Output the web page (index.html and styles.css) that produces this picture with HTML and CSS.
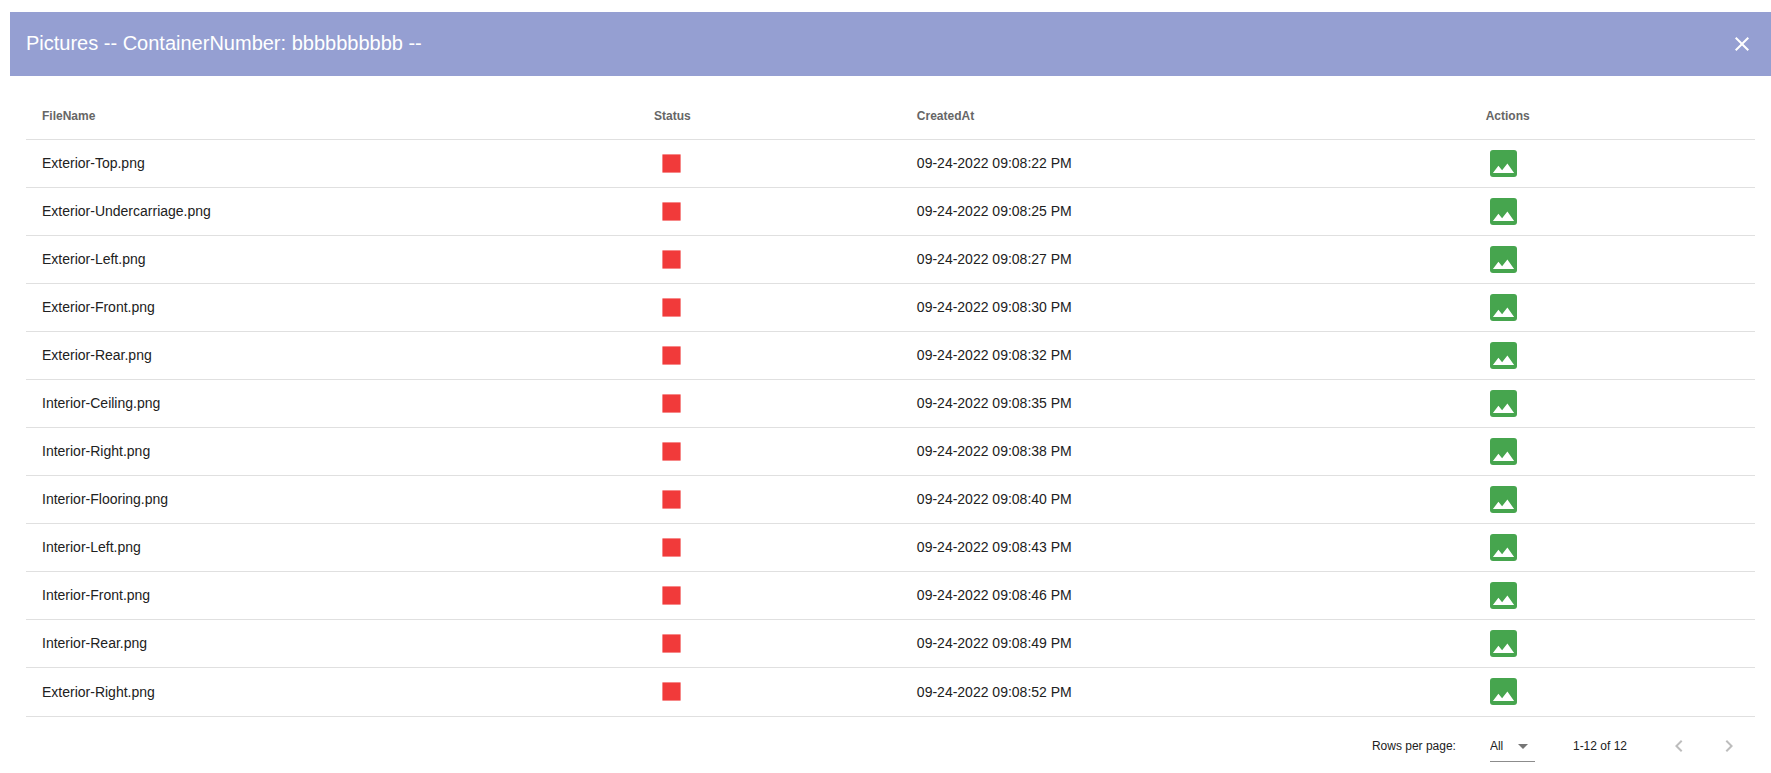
FILE: index.html
```html
<!DOCTYPE html>
<html lang="en">
<head>
<meta charset="utf-8">
<title>Pictures</title>
<link rel="stylesheet" href="styles.css">
</head>
<body>
<main class="dialog">
  <header class="toolbar">
    <h1 class="toolbar-title">Pictures -- ContainerNumber: bbbbbbbbbb --</h1>
    <button class="icon-button" type="button" aria-label="Close">
      <svg width="24" height="24" viewBox="0 0 24 24"><path fill="currentColor" d="M19 6.41L17.59 5 12 10.59 6.41 5 5 6.41 10.59 12 5 17.59 6.41 19 12 13.41 17.59 19 19 17.59 13.41 12z"/></svg>
    </button>
  </header>
  <section class="content">
    <table class="files">
      <colgroup><col class="col-name"><col class="col-status"><col class="col-created"><col></colgroup>
      <thead>
        <tr><th scope="col">FileName</th><th scope="col">Status</th><th scope="col">CreatedAt</th><th scope="col">Actions</th></tr>
      </thead>
      <tbody id="rows"></tbody>
    </table>
    <footer class="pager">
      <label for="page-size">Rows per page:</label>
      <div class="select-box">
        <select id="page-size"><option>All</option><option>5</option><option>10</option><option>15</option></select>
        <svg class="select-arrow" width="10" height="5" viewBox="0 0 10 5"><path fill="currentColor" d="M0 0h10L5 5z"/></svg>
      </div>
      <span class="range">1-12 of 12</span>
      <div class="page-buttons">
        <button class="icon-button" type="button" disabled aria-label="Previous page">
          <svg width="24" height="24" viewBox="0 0 24 24"><path fill="currentColor" d="M15.41 16.58L10.83 12l4.58-4.59L14 6l-6 6 6 6z"/></svg>
        </button>
        <button class="icon-button" type="button" disabled aria-label="Next page">
          <svg width="24" height="24" viewBox="0 0 24 24"><path fill="currentColor" d="M8.59 16.58L13.17 12 8.59 7.41 10 6l6 6-6 6z"/></svg>
        </button>
      </div>
    </footer>
  </section>
</main>
<template id="row">
  <tr>
    <td class="name"></td>
    <td><svg class="status" width="19" height="19" viewBox="0 0 19 19" role="img" aria-label="Stopped"><path fill="currentColor" d="M.4.4h18.2v18.2H.4z"/></svg></td>
    <td class="created"></td>
    <td><button class="view" type="button" aria-label="View picture"><svg width="27" height="27" viewBox="0 0 27 27"><rect width="27" height="27" rx="3" fill="#46a54e"/><path fill="#fff" d="M2.9 22.9L8.4 15.8l3.7 4.4 5.3-6.6L24.1 22.9z"/></svg></button></td>
  </tr>
</template>
<script src="script.js"></script>
</body>
</html>
```
FILE: styles.css
```css
* {
  box-sizing: border-box;
}

body {
  margin: 0;
  background: #fff;
  color: #212121;
  font-family: "Liberation Sans", Arial, sans-serif;
  font-size: 14px;
}

button {
  border: 0;
  padding: 0;
  background: none;
  color: inherit;
}

svg {
  display: block;
}

.dialog {
  padding: 12px 0 0 10px;
}

.toolbar {
  display: flex;
  align-items: flex-start;
  justify-content: space-between;
  height: 64px;
  padding: 14px 11px 0 16px;
  background: #959fd2;
  color: #fff;
}

.toolbar-title {
  margin: 0;
  font-size: 20px;
  font-weight: 400;
  line-height: 34px;
}

.icon-button {
  display: grid;
  place-items: center;
  width: 36px;
  height: 36px;
}

.icon-button:disabled {
  color: #bdbdbd;
}

.content {
  padding: 16px 16px 0;
}

.files {
  width: 100%;
  table-layout: fixed;
  border-spacing: 0;
}

.col-name {
  width: 35.4%;
}

.col-status {
  width: 15.2%;
}

.col-created {
  width: 32.9%;
}

.files th,
.files td {
  height: 48px;
  padding: 0 16px;
  border-bottom: 1px solid #e0e0e0;
  text-align: left;
}

.files th {
  color: #666;
  font-size: 12px;
}

.files .name,
.files .created {
  padding-bottom: 2px;
}

.files tbody tr:last-child td {
  height: 49px;
  padding-bottom: 1px;
}

.status {
  margin-left: 8px;
  color: #f13a3a;
}

.view {
  display: block;
  margin-left: 4px;
}

.pager {
  display: flex;
  align-items: center;
  justify-content: flex-end;
  padding: 11px 8px 0 0;
  font-size: 12px;
}

.select-box {
  position: relative;
  width: 45px;
  margin: 0 38px 0 34px;
}

.select-box select {
  display: block;
  width: 100%;
  height: 32px;
  padding: 0;
  border: 0;
  border-bottom: 1px solid #8c8c8c;
  border-radius: 0;
  appearance: none;
  background: none;
  color: inherit;
  font: inherit;
}

.select-arrow {
  position: absolute;
  top: 14px;
  right: 7px;
  color: #757575;
  pointer-events: none;
}

.page-buttons {
  display: flex;
  gap: 14px;
  margin-left: 34px;
}
```
FILE: script.js
```javascript
const files = [
  ["Exterior-Top.png", "22"],
  ["Exterior-Undercarriage.png", "25"],
  ["Exterior-Left.png", "27"],
  ["Exterior-Front.png", "30"],
  ["Exterior-Rear.png", "32"],
  ["Interior-Ceiling.png", "35"],
  ["Interior-Right.png", "38"],
  ["Interior-Flooring.png", "40"],
  ["Interior-Left.png", "43"],
  ["Interior-Front.png", "46"],
  ["Interior-Rear.png", "49"],
  ["Exterior-Right.png", "52"],
];
const body = document.getElementById("rows");
const template = document.getElementById("row");
for (const [name, seconds] of files) {
  const row = template.content.cloneNode(true);
  row.querySelector(".name").textContent = name;
  row.querySelector(".created").textContent = `09-24-2022 09:08:${seconds} PM`;
  body.append(row);
}
```
